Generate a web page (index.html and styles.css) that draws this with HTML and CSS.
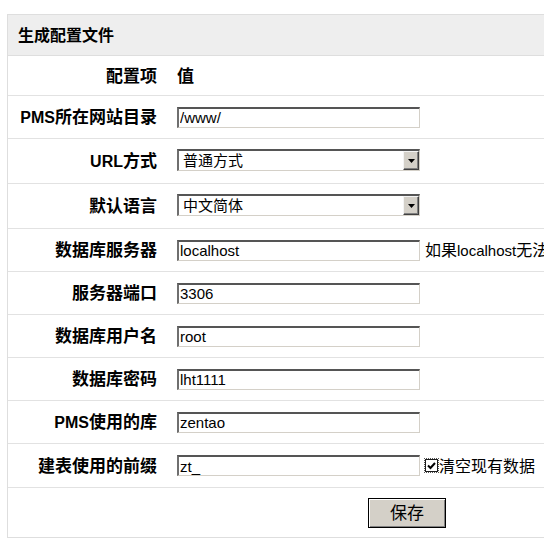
FILE: index.html
```html
<!DOCTYPE html>
<html lang="zh-CN">
<head>
<meta charset="utf-8">
<title>生成配置文件</title>
<link rel="stylesheet" href="styles.css">
</head>
<body>
<div class="panel">
  <div class="caption">生成配置文件</div>
  <div class="row h40">
    <div class="label">配置项</div>
    <div class="value strong">值</div>
  </div>
  <div class="row h43">
    <div class="label"><span class="en">PMS</span>所在网站目录</div>
    <div class="value"><input class="text" type="text" value="/www/"></div>
  </div>
  <div class="row h45">
    <div class="label"><span class="en">URL</span>方式</div>
    <div class="value">
      <div class="select"><span class="sel-val">普通方式</span><span class="sel-btn"><svg width="7" height="4" viewBox="0 0 7 4"><path d="M0 0h7L3.5 4z" fill="#000"/></svg></span></div>
    </div>
  </div>
  <div class="row h45">
    <div class="label">默认语言</div>
    <div class="value">
      <div class="select"><span class="sel-val">中文简体</span><span class="sel-btn"><svg width="7" height="4" viewBox="0 0 7 4"><path d="M0 0h7L3.5 4z" fill="#000"/></svg></span></div>
    </div>
  </div>
  <div class="row h43">
    <div class="label">数据库服务器</div>
    <div class="value"><input class="text" type="text" value="localhost"><span class="note">如果<span class="en-r">localhost</span>无法连接，尝试使用<span class="en-r">127.0.0.1</span></span></div>
  </div>
  <div class="row h43">
    <div class="label">服务器端口</div>
    <div class="value"><input class="text" type="text" value="3306"></div>
  </div>
  <div class="row h43">
    <div class="label">数据库用户名</div>
    <div class="value"><input class="text" type="text" value="root"></div>
  </div>
  <div class="row h43">
    <div class="label">数据库密码</div>
    <div class="value"><input class="text" type="text" value="lht1111"></div>
  </div>
  <div class="row h43">
    <div class="label"><span class="en">PMS</span>使用的库</div>
    <div class="value"><input class="text" type="text" value="zentao"></div>
  </div>
  <div class="row h44">
    <div class="label">建表使用的前缀</div>
    <div class="value"><input class="text" type="text" value="zt_"><span class="check"><svg width="9" height="8" viewBox="0 0 9 8"><path d="M1 3.5l2.5 2.5L8 1" fill="none" stroke="#000" stroke-width="2"/></svg></span><span class="note tight">清空现有数据</span></div>
  </div>
  <div class="row last">
    <div class="actions"><button class="btn" type="button">保存</button></div>
  </div>
</div>
</body>
</html>
```

FILE: styles.css
```css
html, body {
  margin: 0;
  padding: 0;
  overflow: hidden;
  background: #fff;
}
body {
  font-family: "Liberation Sans", "Noto Sans CJK SC", sans-serif;
  color: #000;
}
.panel {
  width: 800px;
  margin: 14px 0 0 7px;
  border: 1px solid #dedede;
  box-sizing: border-box;
}
.caption {
  height: 41px;
  box-sizing: border-box;
  border-bottom: 1px solid #dedede;
  background: #eeeeee;
  padding: 0 0 3px 10px;
  display: flex;
  align-items: center;
  font-size: 16px;
  font-weight: bold;
  font-family: "Noto Sans CJK SC", sans-serif;
}
.row {
  display: flex;
  align-items: center;
  box-sizing: border-box;
  border-bottom: 1px solid #e2e2e2;
}
.h40 { height: 40px; }
.h43 { height: 43px; }
.h44 { height: 44px; }
.h45 { height: 45px; }
.row.last { height: 49px; border-bottom: 0; }
.label {
  width: 159px;
  box-sizing: border-box;
  padding: 0 10px 3px 0;
  text-align: right;
  font-weight: bold;
  font-size: 17px;
  font-family: "Noto Sans CJK SC", sans-serif;
  white-space: nowrap;
}
.en {
  font-family: "Liberation Sans", sans-serif;
  font-size: 16px;
  font-weight: bold;
}
.value {
  flex: 1;
  padding-left: 10px;
  display: flex;
  align-items: center;
  white-space: nowrap;
}
.value.strong {
  font-weight: bold;
  font-size: 17px;
  padding-bottom: 3px;
  font-family: "Noto Sans CJK SC", sans-serif;
}
.text {
  width: 243px;
  height: 21px;
  box-sizing: border-box;
  margin: 0;
  padding: 0 1px;
  border-style: solid;
  border-width: 2px 1px 1px 2px;
  border-color: #555555 #d4d0c8 #d4d0c8 #6f6f6f;
  background: #fff;
  font-family: "Liberation Sans", sans-serif;
  font-size: 15px;
  color: #000;
  outline: none;
}
.select {
  width: 243px;
  height: 22px;
  box-sizing: border-box;
  margin-bottom: 2px;
  border-style: solid;
  border-width: 2px 1px 1px 2px;
  border-color: #555555 #d4d0c8 #d4d0c8 #6f6f6f;
  background: #fff;
  display: flex;
  align-items: stretch;
}
.sel-val {
  flex: 1;
  padding-left: 4px;
  font-family: "Noto Sans CJK SC", sans-serif;
  font-size: 15px;
  line-height: 18px;
}
.sel-btn {
  width: 16px;
  box-sizing: border-box;
  background: #d4d0c8;
  border-style: solid;
  border-width: 1px;
  border-color: #f4f4f4 #404040 #404040 #f4f4f4;
  box-shadow: inset -1px -1px 0 #808080;
  display: flex;
  align-items: center;
  justify-content: center;
}
.note {
  margin-left: 5px;
  font-family: "Noto Sans CJK SC", sans-serif;
  font-size: 16px;
  padding-bottom: 2px;
}
.note.tight { margin-left: 1px; }
.en-r {
  font-family: "Liberation Sans", sans-serif;
  font-size: 15px;
}
.check {
  width: 13px;
  height: 13px;
  box-sizing: border-box;
  margin-left: 5px;
  border: 1px solid #1c1c1c;
  outline: 1px dotted #555;
  outline-offset: 0;
  background: #fff;
  display: flex;
  align-items: center;
  justify-content: center;
}
.actions {
  flex: 1;
  display: flex;
  justify-content: center;
}
.btn {
  width: 78px;
  height: 30px;
  box-sizing: border-box;
  margin: 0;
  padding: 0 0 2px;
  background: #d4d0c8;
  border: 1px solid #000;
  box-shadow: inset 1px 1px 0 #fff, inset -1px -1px 0 #808080;
  font-family: "Noto Sans CJK SC", sans-serif;
  font-size: 17px;
  color: #000;
}
```
